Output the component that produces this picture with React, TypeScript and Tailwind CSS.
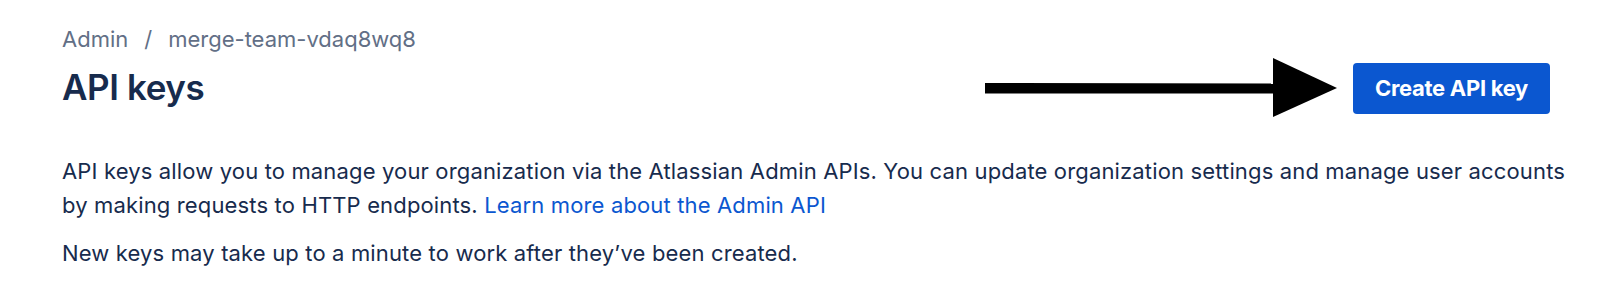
export default function App() {
  return (
    <div className="min-h-[283px] bg-white pl-[62px] pr-[20px] pt-[24px] font-['Inter',sans-serif] text-[#172b4d]">
      {/* Header */}
      <div className="flex items-start justify-between pr-[30px]">
        <div>
          <nav className="flex items-center gap-[16px] text-[22px] leading-[30px] text-[#626f86]">
            <span>Admin</span>
            <span>/</span>
            <span>merge-team-vdaq8wq8</span>
          </nav>
          <h1 className="mt-[12px] text-[35px] font-semibold leading-[42px] tracking-[-0.4px] text-[#172b4d]">
            API keys
          </h1>
        </div>
        <div className="mt-[34px] flex items-center gap-[16px]">
          <svg width="352" height="60" viewBox="0 0 352 60" aria-hidden="true">
            <path d="M0 25 L290 25.5 L290 35.5 L0 35.5 Z" fill="#000" />
            <polygon points="288,0 352,30 288,59" fill="#000" />
          </svg>
          <button className="h-[51px] w-[197px] rounded-[4px] bg-[#0b57d0] text-[22px] font-bold tracking-[-0.3px] text-white">
            Create API key
          </button>
        </div>
      </div>

      {/* Description */}
      <div className="mt-[36px] max-w-[1512px] text-[22px] leading-[34px] tracking-[0.15px]">
        <p>
          API keys allow you to manage your organization via the Atlassian Admin APIs. You can update organization settings and manage user accounts by making requests to HTTP endpoints.{' '}
          <a href="#" className="text-[#0b57d0]">Learn more about the Admin API</a>
        </p>
        <p className="mt-[14px]">New keys may take up to a minute to work after they’ve been created.</p>
      </div>
    </div>
  )
}
